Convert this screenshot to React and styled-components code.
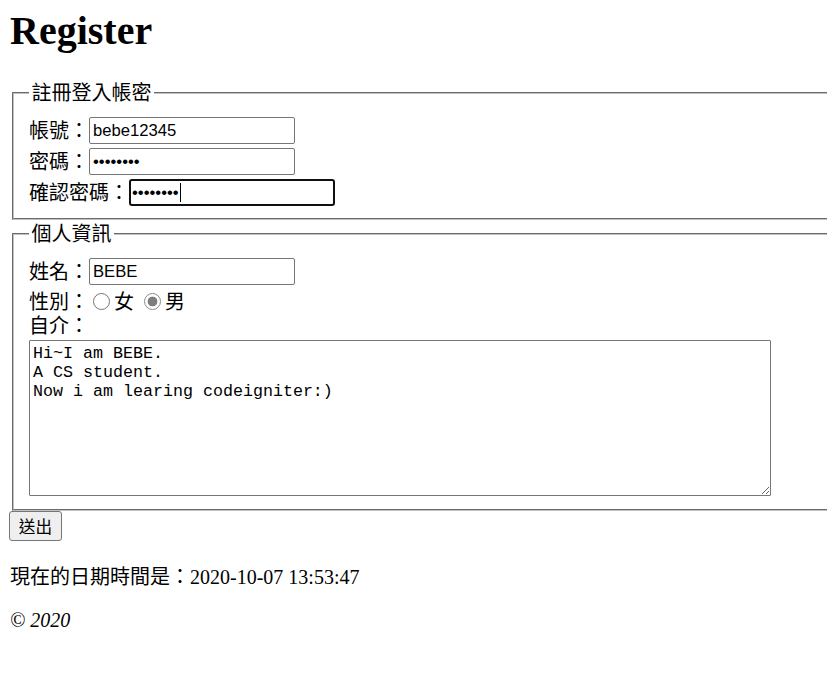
import styled, { createGlobalStyle } from 'styled-components';

const GlobalStyle = createGlobalStyle`
  html {
    overflow-x: hidden;
  }

  body {
    margin: 0;
    background: #fff;
    color: #000;
    font-family: "Liberation Serif", "Noto Sans CJK TC", serif;
    font-size: 20px;
    text-spacing-trim: space-all;
  }
`;

const Page = styled.div`
  padding: 8px 0 0 10px;
`;

const Title = styled.h1`
  margin: 0 0 26px;
  font-size: 40px;
  line-height: 46px;
  font-weight: 700;
`;

const Fieldset = styled.fieldset`
  box-sizing: border-box;
  width: 900px;
  margin: ${(p) => (p.$first ? '0' : '1px')} 0 0 2px;
  padding: 9px 15px ${(p) => p.$bottom}px 15px;
  border: 2px groove #c0c0c0;
  min-width: 0;
`;

const Legend = styled.legend`
  padding: 0 2.5px;
  font-size: 20px;
  line-height: 26px;
`;

const Row = styled.div`
  display: flex;
  align-items: ${(p) => (p.$top ? 'flex-start' : 'center')};
  height: ${(p) => p.$h}px;
`;

const Label = styled.span`
  line-height: ${(p) => (p.$tight ? 20 : 24)}px;
  white-space: nowrap;
`;

const TextInput = styled.input`
  box-sizing: border-box;
  width: 206px;
  height: 27px;
  margin: 0;
  padding: 1px 3px;
  border: 1px solid #767676;
  border-radius: 2px;
  background: #fff;
  color: #000;
  font-family: "Liberation Sans", "Noto Sans CJK TC", sans-serif;
  font-size: 16.67px;
  outline: none;

  ${(p) =>
    p.$focused &&
    `
    border: 2px solid #101010;
    border-radius: 3px;
    padding: 1px 1px;
  `}
`;

const CaretWrap = styled.span`
  position: relative;
  display: inline-flex;
`;

const Caret = styled.span`
  position: absolute;
  left: 51px;
  top: 4px;
  width: 1px;
  height: 19px;
  background: #000;
`;

const Radio = styled.input.attrs({ type: 'radio' })`
  appearance: none;
  box-sizing: border-box;
  width: 17px;
  height: 17px;
  margin: 0 4px 0 ${(p) => p.$gap}px;
  border: 1px solid #767676;
  border-radius: 50%;
  background: #fff;

  &:checked {
    border: 1.5px solid #8a8a8a;
    background: radial-gradient(circle, #7d7d7d 0 4.6px, #fff 5.2px);
  }
`;

const Choice = styled.span`
  line-height: 24px;
`;

const Intro = styled.textarea`
  display: block;
  box-sizing: border-box;
  width: 742px;
  height: 156px;
  margin: 0;
  padding: 2.5px 3px;
  border: 1px solid #767676;
  border-radius: 1px;
  font-family: "Liberation Mono", monospace;
  font-size: 16.67px;
  line-height: 19px;
  color: #000;
  outline: none;
`;

const SubmitButton = styled.button`
  display: block;
  box-sizing: border-box;
  width: 53px;
  height: 30px;
  margin: 0 0 0 -1px;
  padding: 0;
  border: 1px solid #767676;
  border-radius: 3px;
  background: #efefef;
  color: #000;
  font-family: "Liberation Sans", "Noto Sans CJK TC", sans-serif;
  font-size: 16.67px;
`;

const Text = styled.p`
  margin: ${(p) => p.$mt}px 0 0;
  line-height: 23px;
`;

export default function App() {
  return (
    <Page lang="zh-Hant-TW">
      <GlobalStyle />
      <Title lang="en">Register</Title>

      <form onSubmit={(e) => e.preventDefault()}>
        <Fieldset $first $bottom={10}>
          <Legend>註冊登入帳密</Legend>
          <Row $h={31}>
            <Label>帳號：</Label>
            <TextInput type="text" defaultValue="bebe12345" />
          </Row>
          <Row $h={31}>
            <Label>密碼：</Label>
            <TextInput type="password" defaultValue="12345678" />
          </Row>
          <Row $h={31}>
            <Label>確認密碼：</Label>
            <CaretWrap>
              <TextInput type="password" defaultValue="12345678" $focused />
              <Caret />
            </CaretWrap>
          </Row>
        </Fieldset>

        <Fieldset $bottom={13}>
          <Legend>個人資訊</Legend>
          <Row $h={31}>
            <Label>姓名：</Label>
            <TextInput type="text" defaultValue="BEBE" />
          </Row>
          <Row $h={29}>
            <Label>性別：</Label>
            <Radio name="gender" value="f" $gap={4} />
            <Choice>女</Choice>
            <Radio name="gender" value="m" defaultChecked $gap={10} />
            <Choice>男</Choice>
          </Row>
          <Row $h={24} $top>
            <Label $tight>自介：</Label>
          </Row>
          <Intro
            defaultValue={'Hi~I am BEBE.\nA CS student.\nNow i am learing codeigniter:)'}
          />
        </Fieldset>

        <SubmitButton type="submit">送出</SubmitButton>
      </form>

      <Text $mt={25}>現在的日期時間是：2020-10-07 13:53:47</Text>
      <Text $mt={20}>
        <em>© 2020</em>
      </Text>
    </Page>
  );
}
